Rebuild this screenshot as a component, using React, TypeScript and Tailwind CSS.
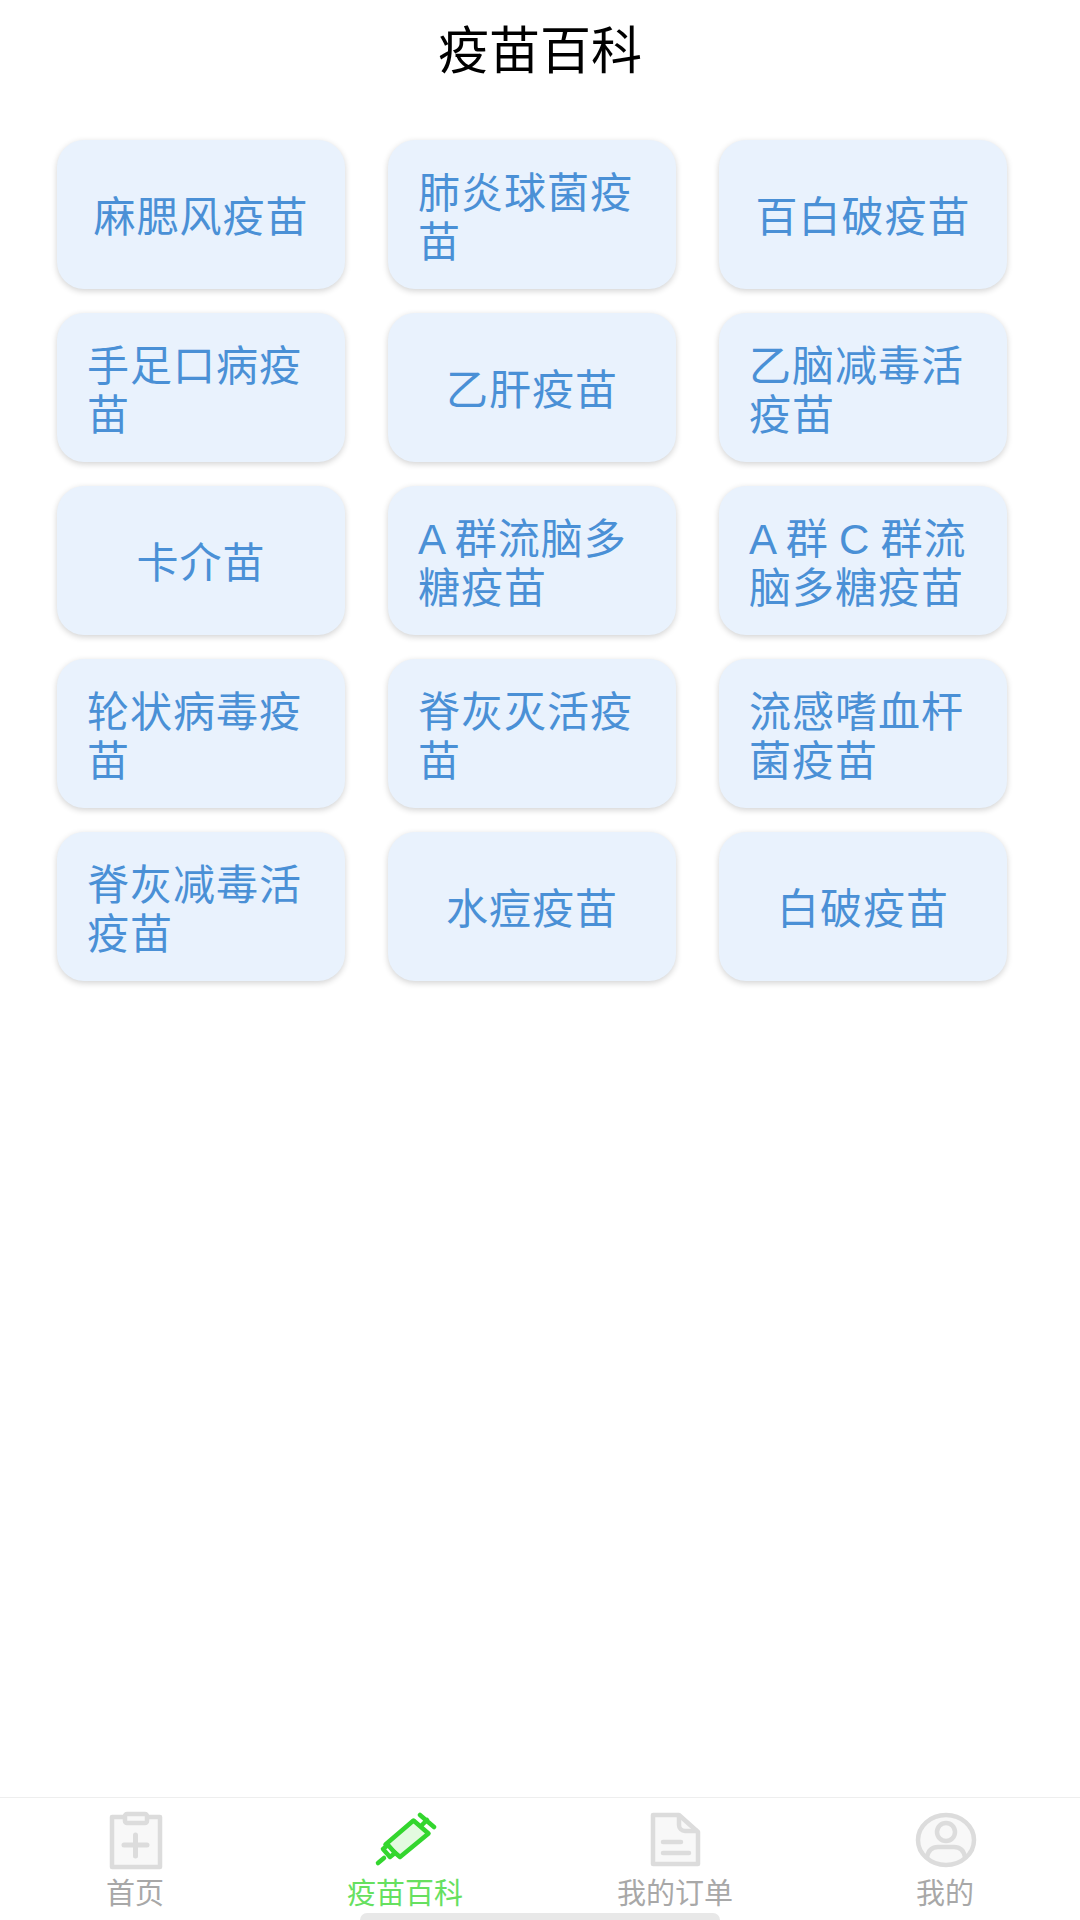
const vaccines = [
  '麻腮风疫苗',
  '肺炎球菌疫苗',
  '百白破疫苗',
  '手足口病疫苗',
  '乙肝疫苗',
  '乙脑减毒活疫苗',
  '卡介苗',
  'A 群流脑多糖疫苗',
  'A 群 C 群流脑多糖疫苗',
  '轮状病毒疫苗',
  '脊灰灭活疫苗',
  '流感嗜血杆菌疫苗',
  '脊灰减毒活疫苗',
  '水痘疫苗',
  '白破疫苗',
]

function HomeIcon() {
  return (
    <svg viewBox="0 0 64 60" className="h-[60px] w-[64px]" fill="none" stroke="#dcdcdc" strokeWidth="4.500">
      <rect x="9" y="7" width="48" height="50" fill="#f8f8f8" strokeLinejoin="round" />
      <rect x="22" y="4" width="22" height="9" rx="2" fill="#f8f8f8" />
      <path d="M21 35H44M32.500 25V46" strokeLinecap="round" strokeWidth="5" />
    </svg>
  )
}

function SyringeIcon() {
  return (
    <svg viewBox="0 0 64 60" className="h-[60px] w-[64px]" fill="none" stroke="#33d62e" strokeWidth="4.500" strokeLinecap="round" strokeLinejoin="round">
      <path d="M40.500 10.500L55.500 23.500L27 47L12.500 34.500Z" fill="#e3fae0" />
      <path d="M47 5L61 17M49 15L54 10" />
      <path d="M10 39L15 35L22 43L17 47Z" fill="#fff" />
      <path d="M5 53L11 48" />
    </svg>
  )
}

function OrderIcon() {
  return (
    <svg viewBox="0 0 64 60" className="h-[60px] w-[64px]" fill="none" stroke="#dcdcdc" strokeWidth="4.500" strokeLinejoin="round">
      <path d="M10 5H36L55 22V54H10Z" fill="#f8f8f8" />
      <path d="M36 5V15A6 6 0 0 0 42 21H55" />
      <path d="M20 32H38M20 43H46" strokeLinecap="round" />
    </svg>
  )
}

function UserIcon() {
  return (
    <svg viewBox="0 0 64 60" className="h-[60px] w-[64px]" fill="none" stroke="#dcdcdc" strokeWidth="4.500">
      <ellipse cx="33" cy="30" rx="28" ry="25" fill="#f8f8f8" />
      <circle cx="33" cy="22" r="9" />
      <path d="M14 47Q16 37 25 37H41Q50 37 52 47" />
    </svg>
  )
}

const tabs = [
  { label: '首页', icon: <HomeIcon />, active: false },
  { label: '疫苗百科', icon: <SyringeIcon />, active: true },
  { label: '我的订单', icon: <OrderIcon />, active: false },
  { label: '我的', icon: <UserIcon />, active: false },
]

export default function App() {
  return (
    <div className="relative flex h-[1920px] w-[1080px] flex-col bg-white font-['Liberation_Sans','Noto_Sans_CJK_SC',sans-serif]">
      <h1 className="mt-[17px] text-center text-[51px] leading-[70px] font-normal text-black">疫苗百科</h1>

      <div className="mt-[53px] grid grid-cols-[repeat(3,288px)] gap-x-[43px] gap-y-[24px] pl-[57px]">
        {vaccines.map((name) => (
          <div
            key={name}
            className="flex h-[149px] items-center justify-center rounded-[27px] bg-[#e9f2fd] px-[30px] pt-[6px] text-[42px] leading-[49px] tracking-[1px] [word-spacing:-2.5px] text-[#4a90d6] shadow-[0_2px_6px_rgba(0,0,0,0.18)]"
          >
            <span>{name}</span>
          </div>
        ))}
      </div>

      <nav className="mt-auto grid h-[123px] grid-cols-4 border-t border-[#eeeeee]">
        {tabs.map((tab) => (
          <div key={tab.label} className="flex flex-col items-center pt-[12px]">
            {tab.icon}
            <span className={tab.active ? 'mt-[5px] text-[29px] leading-[38px] text-[#66e060]' : 'mt-[5px] text-[29px] leading-[38px] text-[#a8a8a8]'}>
              {tab.label}
            </span>
          </div>
        ))}
      </nav>

      <div className="absolute bottom-0 left-[360px] h-[7px] w-[360px] rounded-t-full bg-[#e8e8e8]" />
    </div>
  )
}
